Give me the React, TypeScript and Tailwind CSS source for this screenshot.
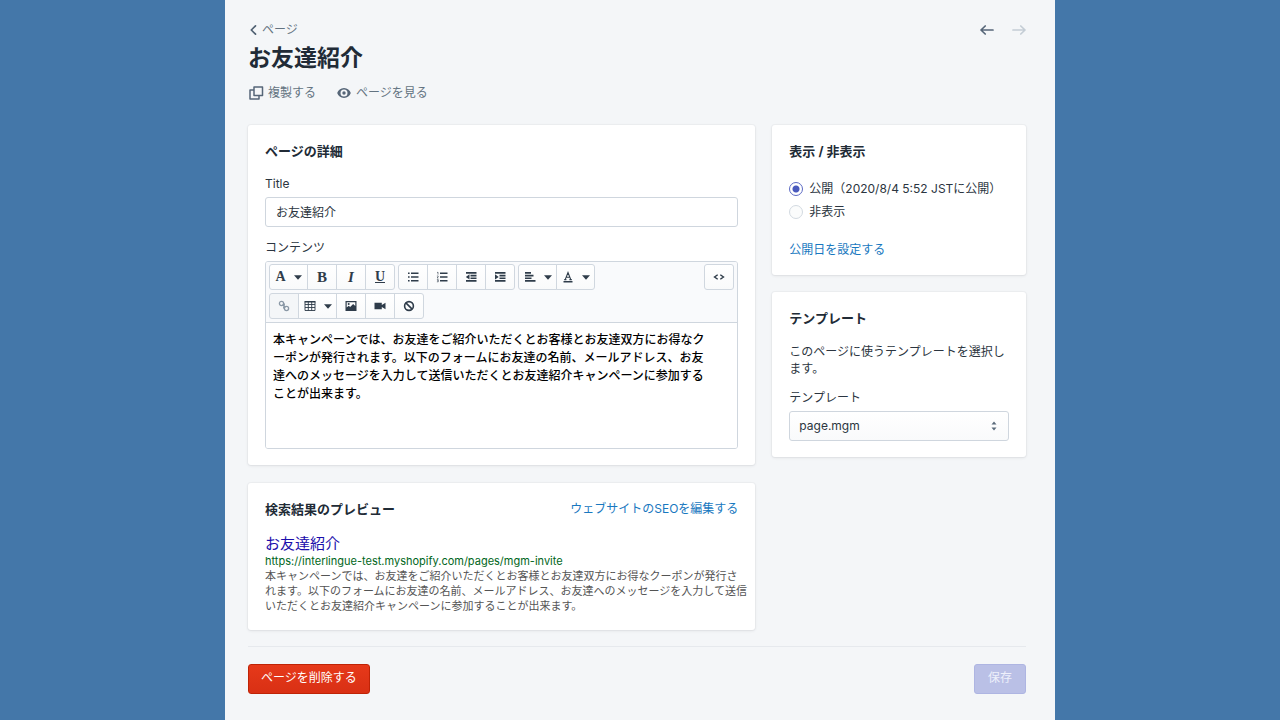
import type { ReactNode } from "react";

const EDITOR_TEXT = [
  "本キャンペーンでは、お友達をご紹介いただくとお客様とお友達双方にお得なク",
  "ーポンが発行されます。以下のフォームにお友達の名前、メールアドレス、お友",
  "達へのメッセージを入力して送信いただくとお友達紹介キャンペーンに参加する",
  "ことが出来ます。",
].join("\n");

function Card({ title, action, children }: { title: string; action?: ReactNode; children: ReactNode }) {
  return (
    <section className="rounded-[3px] bg-white px-[17px] py-4 shadow-[0_0_0_1px_rgba(63,63,68,0.03),0_1px_3px_rgba(63,63,68,0.1)]">
      <div className="mb-3.5 flex items-center justify-between">
        <h2 className="text-[13px] leading-5 font-bold text-[#212b36]">{title}</h2>
        {action}
      </div>
      {children}
    </section>
  );
}

function ToolGroup({ children }: { children: ReactNode }) {
  return <div className="flex pl-px">{children}</div>;
}

function Tool({
  label,
  wide = false,
  muted = false,
  children,
}: {
  label: string;
  wide?: boolean;
  muted?: boolean;
  children: ReactNode;
}) {
  return (
    <button
      type="button"
      aria-label={label}
      className={`-ml-px flex h-[26px] items-center justify-center gap-2 border border-[#d0d7df] first:rounded-l-[3px] last:rounded-r-[3px] ${
        wide ? "w-[39px]" : "w-[30px]"
      } ${muted ? "bg-[#f4f6f8] text-[#8a98a6]" : "bg-linear-to-b from-white to-[#f9fafb] text-[#2f3c4a]"}`}
    >
      {children}
      {wide && (
        <svg viewBox="0 0 8 5" className="h-[5px] w-2" fill="currentColor">
          <path d="M0 0.3h8L4 4.7z" />
        </svg>
      )}
    </button>
  );
}

function Glyph({ children }: { children: ReactNode }) {
  return (
    <svg viewBox="0 0 12 12" className="h-3 w-3" fill="currentColor">
      {children}
    </svg>
  );
}

function Toolbar() {
  return (
    <div className="flex items-start justify-between border-b border-[#cfd6de] bg-[#f9fafc] px-[3px] pt-0.5 pb-[3px]">
      <div className="flex flex-1 flex-wrap gap-[3px]">
        <ToolGroup>
          <Tool label="書式" wide>
            <span className="font-['Liberation_Serif',serif] text-[14px] leading-none font-bold">A</span>
          </Tool>
          <Tool label="太字">
            <span className="font-['Liberation_Serif',serif] text-[15px] leading-none font-bold">B</span>
          </Tool>
          <Tool label="斜体">
            <span className="font-['Liberation_Serif',serif] text-[15px] leading-none font-bold italic">I</span>
          </Tool>
          <Tool label="下線">
            <span className="border-b border-current font-['Liberation_Serif',serif] text-[14px] leading-[11px] font-bold">U</span>
          </Tool>
        </ToolGroup>
        <ToolGroup>
          <Tool label="箇条書き">
            <Glyph>
              <path d="M1 1.5h1.6v1.6H1zM1 5.2h1.6v1.6H1zM1 8.9h1.6v1.6H1zM4 1.6h7.5V3H4zM4 5.3h7.5v1.4H4zM4 9h7.5v1.4H4z" />
            </Glyph>
          </Tool>
          <Tool label="番号付きリスト">
            <Glyph>
              <path d="M4 1.6h7.5V3H4zM4 5.3h7.5v1.4H4zM4 9h7.5v1.4H4z" />
              <path d="M1 1.6l1-.4v2.4M.9 5h1.3v.8L1 7h1.4M.9 8.6h1.4v2.2H.9M1.2 9.7h1" fill="none" stroke="currentColor" strokeWidth=".6" />
            </Glyph>
          </Tool>
          <Tool label="インデントを減らす">
            <Glyph>
              <path d="M1 1h10.500v1.700H1zM5.500 3.700h6v1.700h-6zM5.500 6.400h6v1.700h-6zM1 9.100h10.500v1.700H1zM4.500 3.300v5.200L.8 5.900z" />
            </Glyph>
          </Tool>
          <Tool label="インデントを増やす">
            <Glyph>
              <path d="M1 1h10.500v1.700H1zM5.500 3.700h6v1.700h-6zM5.500 6.400h6v1.700h-6zM1 9.100h10.500v1.700H1zM1 3.300v5.200l3.700-2.600z" />
            </Glyph>
          </Tool>
        </ToolGroup>
        <ToolGroup>
          <Tool label="配置" wide>
            <Glyph>
              <path d="M1 1h6v1.700H1zM1 3.700h8.500v1.700H1zM1 6.400h6.500v1.700H1zM1 9.100h10.500v1.700H1z" />
            </Glyph>
          </Tool>
          <Tool label="文字色" wide>
            <Glyph>
              <path d="M1.500 10h9v1.500h-9z" />
              <path d="M3.200 8.600L6 1.600l2.800 7M4.200 6.300h3.600M2.200 8.600h2.200M7.400 8.600h2.400" fill="none" stroke="currentColor" strokeWidth="1.100" />
            </Glyph>
          </Tool>
        </ToolGroup>
        <ToolGroup>
          <Tool label="リンク" muted>
            <svg viewBox="0 0 12 12" className="h-3 w-3" fill="none" stroke="currentColor" strokeWidth="1.3">
              <circle cx="3.500" cy="3.500" r="2.100" />
              <circle cx="8.500" cy="8.500" r="2.100" />
              <path d="M4.600 4.600l2.800 2.800M5.900 3.300c.8 1 .6 2-.2 2.700M6.100 8.700c-.8-1-.6-2 .2-2.700" />
            </svg>
          </Tool>
          <Tool label="表" wide>
            <svg viewBox="0 0 12 12" className="h-3 w-3" fill="none" stroke="currentColor">
              <path d="M1 1.500h10v9H1zM1 4.500h10M1 7.500h10M4.300 2v8.500M7.700 2v8.500" strokeWidth=".9" />
              <path d="M.6 1.700h10.800" strokeWidth="1.500" />
            </svg>
          </Tool>
          <Tool label="画像">
            <Glyph>
              <path d="M.5 1h11v10H.5zM1.700 2.200v5.300l2-1.800 1.500 1.200 2.900-3 2.200 2.200V2.200z" fillRule="evenodd" />
              <circle cx="3.700" cy="4" r="1" />
            </Glyph>
          </Tool>
          <Tool label="動画">
            <Glyph>
              <path d="M.5 2.700h7.300V5l3.700-2.200v6.400L7.800 7v2.300H.5z" />
            </Glyph>
          </Tool>
          <Tool label="書式をクリア">
            <svg viewBox="0 0 12 12" className="h-3 w-3" fill="none" stroke="currentColor" strokeWidth="1.600">
              <circle cx="6" cy="6" r="4.400" />
              <path d="M2.900 2.900l6.200 6.200" />
            </svg>
          </Tool>
        </ToolGroup>
      </div>
      <ToolGroup>
        <Tool label="HTMLを表示">
          <svg viewBox="0 0 12 12" className="h-3 w-3" fill="none" stroke="currentColor" strokeWidth="1.400">
            <path d="M4.700 3.700L1.500 6l3.200 2.300M7.300 3.700L10.500 6 7.300 8.300" />
          </svg>
        </Tool>
      </ToolGroup>
    </div>
  );
}

function ArrowIcon({ flipped = false }: { flipped?: boolean }) {
  return (
    <svg
      viewBox="0 0 14 12"
      className={flipped ? "h-3 w-3.5 rotate-180" : "h-3 w-3.5"}
      fill="none"
      stroke="currentColor"
      strokeWidth="1.700"
      strokeLinecap="round"
      strokeLinejoin="round"
    >
      <path d="M13 6H1.200M5.200 2L1 6l4.200 4" />
    </svg>
  );
}

export default function App() {
  return (
    <div lang="ja" className="min-h-screen bg-[#4477a9] font-['Inter','Noto_Sans_CJK_JP',sans-serif] text-[12px] leading-[18px] text-[#2b3540]">
      <main className="mx-auto min-h-screen max-w-[830px] bg-[#f4f6f8] pt-[21px] pr-[29px] pb-6 pl-[23px]">
        <header>
          <div className="flex items-center justify-between">
            <a href="#pages" className="flex items-center gap-1 text-[#637381]">
              <svg viewBox="0 0 10 12" className="h-3 w-2.5" fill="none" stroke="#4f6072" strokeWidth="1.700" strokeLinecap="round" strokeLinejoin="round">
                <path d="M7.500 1.800L3.300 6l4.200 4.200" />
              </svg>
              ページ
            </a>
            <nav className="flex gap-[18px] text-[#566678]">
              <button type="button" aria-label="前のページ"><ArrowIcon /></button>
              <button type="button" aria-label="次のページ" disabled className="text-[#c4cdd5]"><ArrowIcon flipped /></button>
            </nav>
          </div>
          <h1 className="text-[23px] leading-[38px] font-bold text-[#212b36]">お友達紹介</h1>
          <div className="mt-[7px] flex gap-5 text-[#637381]">
            <button type="button" className="flex items-center gap-1">
              <svg viewBox="0 0 16 16" className="h-4 w-4" fill="none" stroke="#566678" strokeWidth="1.500" strokeLinejoin="round">
                <path d="M6 2h8.500v8.500H6z" />
                <path d="M6 5H2v9h9v-3.500" />
              </svg>
              複製する
            </button>
            <button type="button" className="flex items-center gap-1">
              <svg viewBox="0 0 16 16" className="h-4 w-4">
                <path d="M8 3C4.600 3 2.200 5.300 1.200 8c1 2.700 3.400 5 6.800 5s5.800-2.300 6.800-5C13.800 5.300 11.400 3 8 3zm0 1.500a3.500 3.500 0 1 1 0 7 3.500 3.500 0 0 1 0-7z" fill="#566678" fillRule="evenodd" />
                <circle cx="8" cy="8" r="1.700" fill="#566678" />
              </svg>
              ページを見る
            </button>
          </div>
        </header>

        <div className="mt-[23px] grid grid-cols-[2fr_1fr] items-start gap-[17px]">
          <div className="grid min-w-0 gap-[18px]">
            <Card title="ページの詳細">
              <label htmlFor="title" className="mb-1 block">Title</label>
              <input
                id="title"
                defaultValue="お友達紹介"
                className="block h-[30px] w-full rounded-[3px] border border-[#cfd6de] bg-white px-2.5 pb-0.5 outline-none"
              />
              <label htmlFor="content" className="mt-3 mb-1 block">コンテンツ</label>
              <div className="overflow-hidden rounded-[3px] border border-[#cfd6de]">
                <Toolbar />
                <textarea
                  id="content"
                  defaultValue={EDITOR_TEXT}
                  className="block h-[125px] w-full resize-none bg-white px-[7px] py-2 font-medium text-black outline-none"
                />
              </div>
            </Card>
            <Card
              title="検索結果のプレビュー"
              action={<a href="#seo" className="text-[#1878c0]">ウェブサイトのSEOを編集する</a>}
            >
              <p className="pt-px text-[15px] leading-5 text-[#1a0dab]">お友達紹介</p>
              <p className="text-[11px] leading-[15px] text-[#006621]">https://interlingue-test.myshopify.com/pages/mgm-invite</p>
              <p className="-mr-3.5 text-[11px] leading-[15px] text-[#545454]">
                本キャンペーンでは、お友達をご紹介いただくとお客様とお友達双方にお得なクーポンが発行さ
                <br />
                れます。以下のフォームにお友達の名前、メールアドレス、お友達へのメッセージを入力して送信
                <br />
                いただくとお友達紹介キャンペーンに参加することが出来ます。
              </p>
            </Card>
          </div>

          <div className="grid min-w-0 gap-[17px]">
            <Card title="表示 / 非表示">
              <div className="grid gap-[5px] pt-[5px]">
                <label className="flex items-center gap-1.5">
                  <input
                    type="radio"
                    name="visibility"
                    defaultChecked
                    className="h-3.5 w-3.5 appearance-none rounded-full border border-[#c4cdd5] bg-white checked:border-[#5c6ac4] checked:bg-[radial-gradient(circle,#4959bd_3px,#ffffff_4px)]"
                  />
                  <span className="whitespace-nowrap">公開（2020/8/4 5:52 JSTに公開）</span>
                </label>
                <label className="flex items-center gap-1.5">
                  <input
                    type="radio"
                    name="visibility"
                    className="h-3.5 w-3.5 appearance-none rounded-full border border-[#d3dae1] bg-[#fbfcfc] checked:border-[#5c6ac4] checked:bg-[radial-gradient(circle,#4959bd_3px,#ffffff_4px)]"
                  />
                  <span>非表示</span>
                </label>
              </div>
              <a href="#schedule" className="mt-5 block text-[#1878c0]">公開日を設定する</a>
            </Card>
            <Card title="テンプレート">
              <p className="pt-px leading-[17px]">このページに使うテンプレートを選択します。</p>
              <label htmlFor="template" className="mt-3 mb-1 block">テンプレート</label>
              <div className="relative">
                <select
                  id="template"
                  className="block h-[30px] w-full appearance-none rounded-[3px] border border-[#cfd6de] bg-linear-to-b from-white to-[#f9fafb] pr-6 pl-[9px] outline-none"
                >
                  <option>page.mgm</option>
                </select>
                <svg viewBox="0 0 6 10" className="pointer-events-none absolute top-2.5 right-3 h-2.5 w-1.5" fill="#5b6b7b">
                  <path d="M3 .5L5.500 3.500H.5zM3 9.500L.5 6.500h5z" />
                </svg>
              </div>
            </Card>
          </div>
        </div>

        <footer className="mt-4 flex items-start justify-between border-t border-[#e6e9ed] pt-[17px]">
          <button
            type="button"
            className="h-[30px] rounded-[3px] border border-[#bf2306] bg-linear-to-b from-[#e6391a] to-[#d93014] px-3 pb-0.5 text-white"
          >
            ページを削除する
          </button>
          <button type="button" disabled className="h-[30px] rounded-[3px] border border-[#aeb5e2] bg-[#bac0e6] px-[13px] pb-0.5 text-[#eef0fb]">
            保存
          </button>
        </footer>
      </main>
    </div>
  );
}
